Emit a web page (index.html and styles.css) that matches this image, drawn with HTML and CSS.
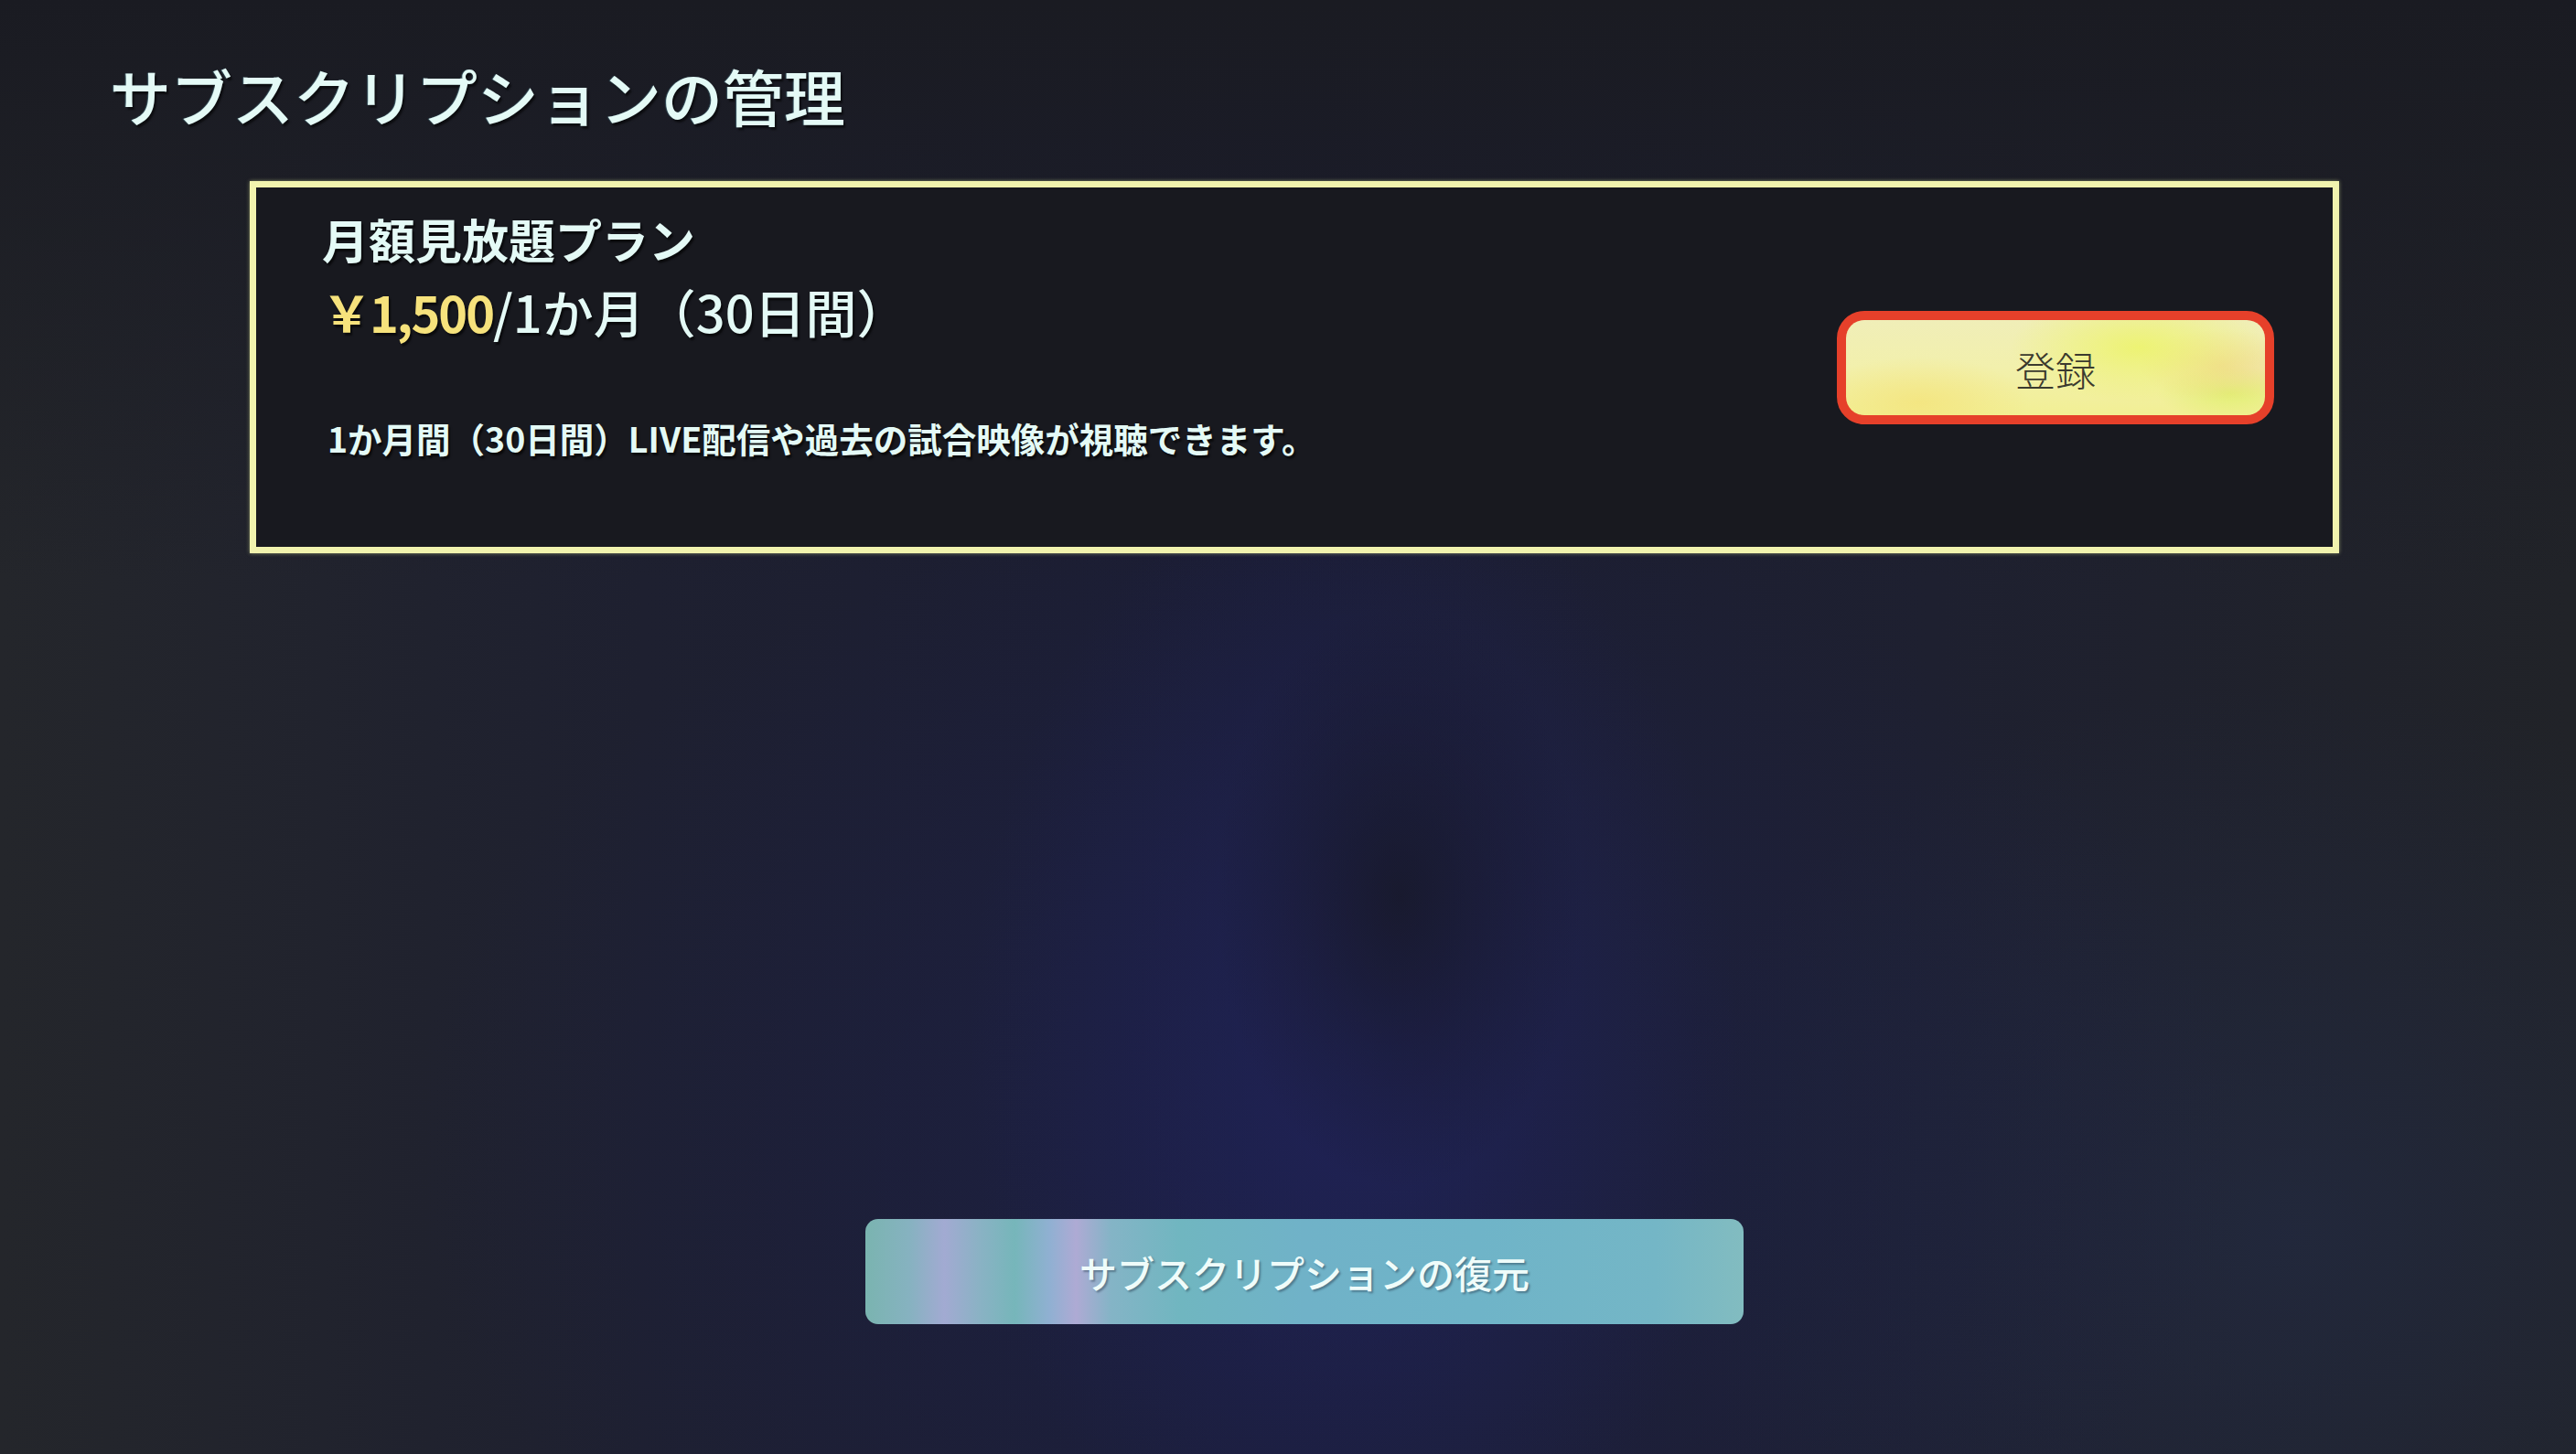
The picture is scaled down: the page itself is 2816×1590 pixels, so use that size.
FILE: index.html
```html
<!DOCTYPE html>
<html lang="ja">
<head>
<meta charset="utf-8">
<title>サブスクリプションの管理</title>
<link rel="stylesheet" href="styles.css">
</head>
<body>
<main class="screen">
  <h1 class="title">サブスクリプションの管理</h1>
  <section class="card">
    <div class="card-body">
      <h2 class="plan-name">月額見放題プラン</h2>
      <p class="price"><span class="price-amount">￥1,500</span>/1か月（30日間）</p>
      <p class="desc">1か月間（30日間）LIVE配信や過去の試合映像が視聴できます。</p>
    </div>
    <button class="btn-register" type="button"><span class="btn-register-inner">登録</span></button>
  </section>
  <button class="btn-restore" type="button">サブスクリプションの復元</button>
</main>
</body>
</html>
```

FILE: styles.css
```css
html, body {
  margin: 0;
  padding: 0;
}

body {
  width: 2816px;
  height: 1590px;
  overflow: hidden;
  background: #1b1c25;
  font-family: "Noto Sans CJK JP", "Noto Sans", sans-serif;
  color: #e9fbf7;
}

.screen {
  width: 2816px;
  height: 1590px;
  box-sizing: border-box;
  display: flex;
  flex-direction: column;
  align-items: flex-start;
  background:
    radial-gradient(ellipse 200px 320px at 1530px 980px, rgba(22,23,34,0.7), rgba(22,23,34,0) 100%),
    radial-gradient(ellipse 420px 650px at 1480px 1150px, rgba(34,36,100,0.55), rgba(34,36,100,0) 100%),
    radial-gradient(ellipse 1000px 700px at 1450px 1250px, rgba(28,32,72,0.75), rgba(28,32,72,0) 100%),
    radial-gradient(ellipse 700px 600px at 2500px 1350px, rgba(35,44,70,0.6), rgba(35,44,70,0) 100%),
    linear-gradient(180deg, #1a1b22 0%, rgba(26,27,34,0) 40%),
    linear-gradient(90deg, #24262b 0%, #1e2030 25%, #1b1d34 50%, #1e2030 75%, #212328 100%);
}

.title {
  margin: 0;
  padding: 66px 0 0 120px;
  font-size: 67px;
  line-height: 76px;
  font-weight: 500;
  letter-spacing: 0;
  color: #e4faf6;
  text-shadow: 2px 3px 2px rgba(0,0,0,0.55), -1px 0 1px rgba(120,200,220,0.35);
}

.card {
  margin: 56px 0 0 273px;
  width: 2284px;
  height: 407px;
  box-sizing: border-box;
  border: 7px solid #f1f3ae;
  background: #18191f;
  display: flex;
  align-items: center;
  justify-content: space-between;
  padding: 0 64px 0 72px;
  box-shadow: 0 0 4px rgba(230,240,160,0.5);
}

.card-body {
  align-self: flex-start;
  padding-top: 26px;
}

.plan-name {
  margin: 0;
  font-size: 51px;
  line-height: 60px;
  font-weight: 700;
  color: #e4faf6;
  text-shadow: 2px 3px 2px rgba(0,0,0,0.6);
}

.price {
  margin: 14px 0 0 0;
  font-size: 56px;
  line-height: 70px;
  font-weight: 500;
  color: #e4faf6;
  text-shadow: 2px 3px 2px rgba(0,0,0,0.6);
}

.price-amount {
  color: #f6e27c;
  font-size: 54px;
  font-weight: 700;
  letter-spacing: -2px;
}

.desc {
  margin: 78px 0 0 6px;
  font-size: 37.5px;
  line-height: 50px;
  font-weight: 700;
  color: #e4faf6;
  text-shadow: 2px 3px 2px rgba(0,0,0,0.6);
}

.btn-register {
  margin: 0;
  padding: 0;
  width: 478px;
  height: 124px;
  box-sizing: border-box;
  border: 10px solid #e6402a;
  border-radius: 30px;
  background: #e6402a;
  font-family: inherit;
  cursor: pointer;
  display: flex;
}

.btn-register-inner {
  flex: 1;
  display: flex;
  align-items: center;
  justify-content: center;
  border-radius: 20px;
  background:
    radial-gradient(ellipse 140px 60px at 320px 30px, rgba(236,244,100,0.8), rgba(236,244,100,0) 100%),
    radial-gradient(ellipse 90px 40px at 410px 50px, rgba(240,205,130,0.6), rgba(240,205,130,0) 100%),
    radial-gradient(ellipse 80px 30px at 420px 80px, rgba(215,240,90,0.6), rgba(215,240,90,0) 100%),
    radial-gradient(ellipse 120px 50px at 80px 90px, rgba(244,226,120,0.7), rgba(244,226,120,0) 100%),
    linear-gradient(180deg, #f0eeb8 0%, #f2f0ac 50%, #f2ef94 100%);
  font-size: 44px;
  font-weight: 300;
  color: #3b3a2e;
  padding-top: 4px;
}

.btn-restore {
  margin: auto 0 142px 946px;
  width: 960px;
  height: 115px;
  padding: 0;
  border: 0;
  border-radius: 14px;
  font-family: inherit;
  font-size: 41px;
  font-weight: 500;
  color: #effcfa;
  text-shadow: 2px 2px 2px rgba(40,60,80,0.45);
  cursor: pointer;
  background:
    linear-gradient(90deg,
      #7ab4b0 0%,
      #86b2c0 5%,
      #a2aad2 9%,
      #8ab2c4 13%,
      #76b6ba 17%,
      #90b0d2 21%,
      #aeaad4 24%,
      #84b4c6 28%,
      #70b6c0 36%,
      #70b2c8 50%,
      #6fb4c8 70%,
      #74b6c6 90%,
      #82bcc0 100%);
}
```
